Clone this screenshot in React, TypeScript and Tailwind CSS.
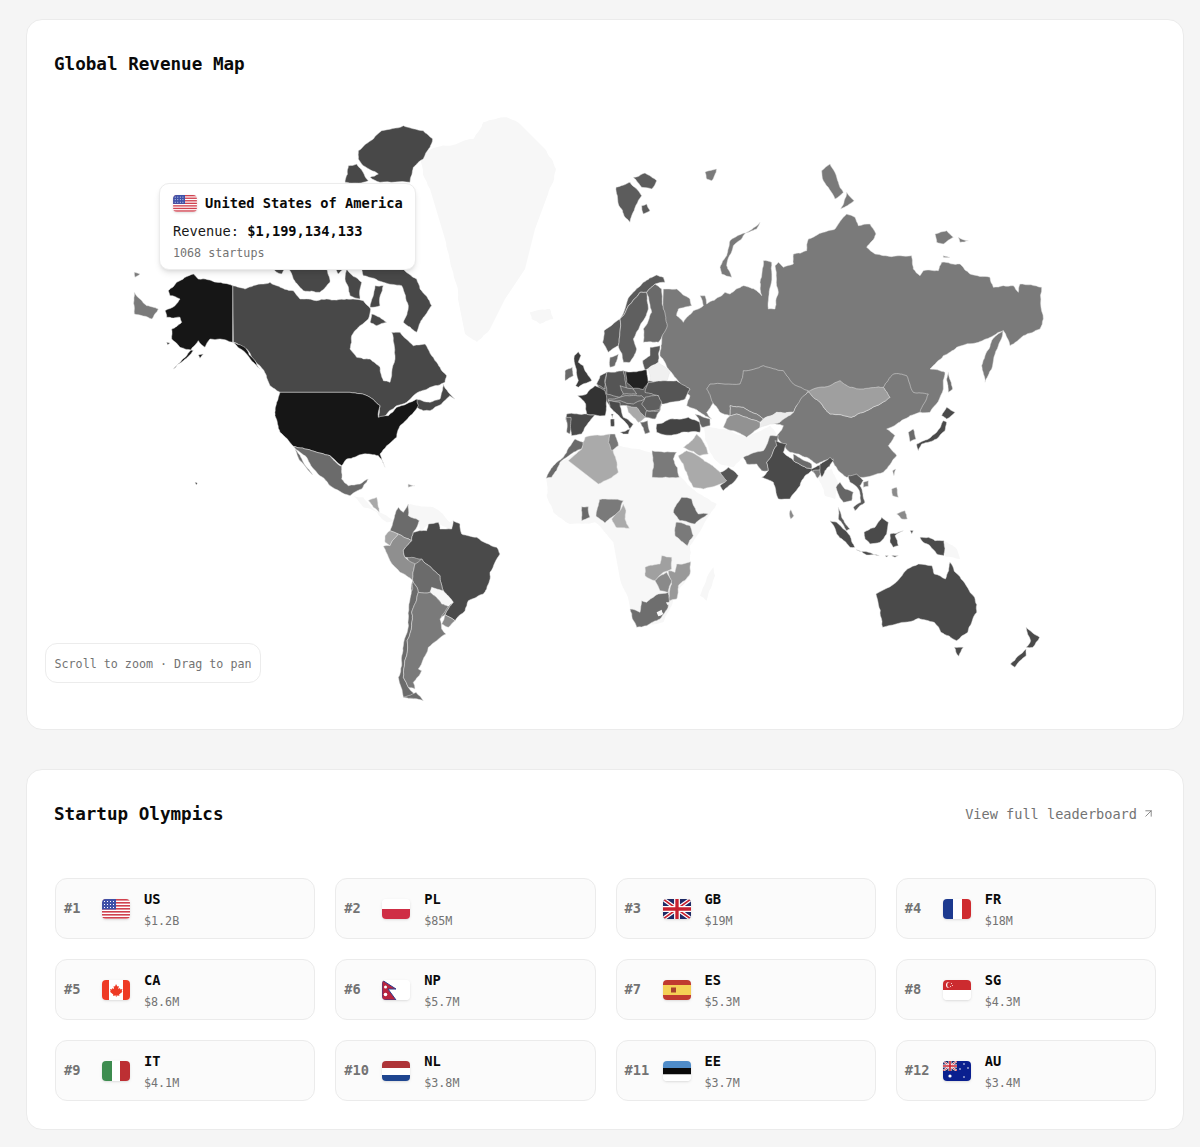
import { ArrowUpRight } from "lucide-react";

type Shape = [string, string];

// traced by hand, each list is in the coordinates of its own group
const northAmerica: Shape[] = [
  ["#f7f7f7", "880,130 960,110 1030,90 1060,40 1130,25 1170,45 1245,120 1278,180 1254,255 1215,360 1185,480 1125,570 1080,660 1041,699 1005,675 984,570 966,480 945,390 900,240 870,150"],
  ["#484848", "685,125 730,90 755,65 820,50 880,65 908,90 900,115 880,150 850,175 840,220 750,220 720,205 745,195 700,170 685,150"],
  ["#484848", "645,220 655,170 680,165 715,215 700,220"],
  ["#484848", "425,478 465,478 455,495 440,490"],
  ["#484848", "475,478 590,478 600,520 570,550 520,545 490,510"],
  ["#484848", "615,478 640,480 625,495"],
  ["#484848", "650,478 695,520 690,570 660,560 645,510"],
  ["#484848", "695,478 815,478 860,510 870,540 905,590 880,625 860,670 820,640 835,590 815,530 760,520 700,500"],
  ["#484848", "735,530 760,530 750,590 720,595"],
  ["#484848", "725,615 770,640 740,650 720,640"],
  ["#484848", "308,530 345,540 400,525 420,520 440,530 490,545 510,570 560,575 590,570 650,570 700,575 722,600 715,630 690,650 665,680 660,720 680,745 720,750 750,775 760,815 780,820 795,740 785,670 810,670 850,710 885,705 920,760 950,800 945,820 900,835 850,860 830,880 800,890 760,925 745,930 750,890 720,865 660,850 450,850 420,830 390,770 350,720 310,700"],
  ["#484848", "860,870 900,880 930,870 940,825 975,870 960,860 900,905 880,905 860,895"],
  ["#161616", "190,495 205,510 260,520 308,530 308,700 270,690 240,690 225,715 205,695 170,740 130,780 160,755 190,725 150,715 125,690 125,660 155,640 150,625 110,625 105,605 135,590 150,570 120,560 115,545 140,520"],
  ["#161616", "308,700 345,715 375,755 390,780 375,765 345,730"],
  ["#161616", "205,738 220,735 210,748"],
  ["#161616", "110,700 120,702 113,707"],
  ["#161616", "450,850 660,850 720,865 750,890 745,925 775,920 800,895 860,870 865,890 840,920 810,950 800,985 770,1010 750,1035 765,1075 745,1040 700,1035 650,1050 635,1070 600,1040 545,1025 490,1012 450,970 435,920 440,880"],
  ["#6b6b6b", "490,1012 545,1025 600,1040 635,1072 635,1110 655,1130 690,1125 715,1110 695,1140 660,1160 600,1130 560,1090 530,1045 510,1030"],
  ["#6b6b6b", "495,1020 520,1060 548,1098 510,1055"],
  ["#7a7a7a", "13,550 50,590 85,600 65,630 13,615"],
  ["#7a7a7a", "13,490 30,495 15,505"],
  ["#161616", "195,1120 202,1122 199,1128"],
];

const eurasia: Shape[] = [
  ["#f7f7f7", "0,490 60,480 70,510 30,525 5,510"],
  ["#f7f7f7", "520,830 580,840 650,865 720,830 740,855 700,905 640,925 610,955 570,945 540,910"],
  ["#f7f7f7", "850,965 905,960 925,1010 915,1050 885,1040 870,1000"],
  // the south edge runs under Kazakhstan and China, which are drawn on top
  ["#7a7a7a", "400,420 440,420 480,450 485,470 445,480 440,500 460,520 490,485 520,470 510,440 525,440 530,465 575,440 585,430 600,435 640,410 680,425 695,440 690,400 700,335 725,340 722,410 715,480 735,480 745,430 735,350 745,340 760,355 790,345 790,315 830,305 835,270 880,250 915,240 950,195 975,205 985,230 1020,225 1038,255 1010,295 1035,315 1060,320 1110,320 1145,320 1150,360 1170,380 1180,365 1225,365 1235,340 1290,345 1320,375 1380,385 1390,415 1450,410 1465,430 1470,405 1535,415 1540,510 1530,540 1480,560 1440,590 1420,545 1390,560 1345,580 1280,595 1240,620 1200,660 1245,670 1240,720 1200,790 1170,790 1150,770 1000,750 850,760 700,720 580,740 550,760 530,790 545,810 510,790 470,770 480,740 440,690 415,660 390,620 395,580"],
  ["#7a7a7a", "1420,545 1405,590 1385,660 1365,700 1355,650 1365,620 1385,575"],
  ["#7a7a7a", "690,220 680,240 635,255 600,275 590,320 570,355 575,375 605,385 590,350 610,290 650,250"],
  ["#7a7a7a", "875,65 900,45 925,100 940,130 915,150 880,95"],
  ["#7a7a7a", "950,130 972,155 932,180"],
  ["#7a7a7a", "1215,255 1250,245 1270,265 1240,285 1220,280"],
  ["#7a7a7a", "1285,265 1315,275 1290,280"],
  ["#7a7a7a", "1240,320 1260,325 1240,325"],
  ["#7a7a7a", "525,70 560,60 545,95 530,90"],
  ["#7a7a7a", "530,720 540,705 630,705 640,665 700,650 760,665 790,705 835,725 800,770 790,790 740,790 700,810 680,795 640,775 600,770 600,800 570,790 545,755"],
  ["#7a7a7a", "835,728 870,760 900,795 965,805 1000,790 1040,770 1080,745 1060,715 1090,675 1130,680 1150,730 1195,735 1170,790 1140,800 1100,825 1070,840 1095,860 1075,890 1100,920 1060,970 990,985 950,985 925,965 905,930 860,945 830,925 780,910 740,860 760,830 720,820 790,790 800,770"],
  ["#9f9f9f", "835,728 900,710 930,695 960,715 1000,720 1060,715 1080,745 1040,770 1000,790 965,805 900,795 870,760"],
  ["#7f7f7f", "600,770 640,775 680,795 700,810 690,820 650,805 620,795 600,800"],
  ["#929292", "600,800 620,795 650,805 690,820 690,835 650,865 610,845 580,835 590,810"],
  ["#ececec", "700,810 740,790 790,790 750,820 720,825 690,835"],
  ["#6b6b6b", "640,925 700,905 720,860 745,860 740,890 710,940 715,965 695,965 680,945 650,945"],
  ["#4a4a4a", "735,875 770,885 760,910 790,935 845,960 895,940 910,930 885,960 860,975 845,965 825,980 810,1010 780,1050 745,1050 730,1000 695,985 715,965 710,940 740,890"],
  ["#6b6b6b", "790,915 845,945 845,960 790,935"],
  ["#7a7a7a", "848,965 878,962 862,988"],
  ["#4a4a4a", "1160,885 1195,870 1220,850 1240,815 1250,820 1245,845 1220,870 1175,885 1165,905"],
  ["#4a4a4a", "1235,800 1250,775 1275,790 1250,810"],
  ["#6b6b6b", "1255,670 1268,720 1255,730 1250,690"],
  ["#6b6b6b", "1135,850 1150,840 1158,870 1140,878"],
  ["#5c5c5c", "258,115 300,100 335,140 305,200 300,220 285,205 265,165"],
  ["#5c5c5c", "310,85 345,72 380,95 365,120 335,115"],
  ["#5c5c5c", "335,170 350,165 360,185 340,195"],
  ["#5a5a5a", "400,385 380,378 340,400 300,440 270,510 222,545 218,580 235,610 265,590 270,510 295,470 330,430 350,430 375,405 405,400"],
  ["#5f5f5f", "330,430 350,430 355,480 330,530 310,570 320,600 300,640 280,640 265,590 270,510 295,470"],
  ["#6a6a6a", "375,405 395,420 400,480 412,530 385,580 340,580 340,540 365,490 350,430"],
  ["#5a5a5a", "360,595 390,590 385,640 345,665 338,635 360,620"],
];

const europe: Shape[] = [
  // underlay so the small countries meet without white gaps
  ["#5f5f5f", "125,135 155,100 205,95 280,125 330,125 405,150 390,180 320,195 315,215 300,240 270,235 250,250 215,200 165,205 155,185"],
  ["#3c3c3c", "58,50 70,38 78,50 70,70 85,80 100,110 110,125 70,145 62,140 70,125 62,85"],
  ["#6a6a6a", "30,95 52,85 55,110 30,125"],
  ["#6a6a6a", "165,55 190,45 180,80 165,85"],
  ["#4a4a4a", "35,225 95,225 120,228 90,265 80,285 50,290 45,270 32,240"],
  ["#333333", "95,165 120,140 150,155 155,185 150,230 120,228 95,225 92,195 68,170"],
  ["#5f5f5f", "32,235 48,235 45,285 35,280"],
  ["#555555", "155,100 205,95 215,150 195,175 155,165 150,130"],
  ["#4a4a4a", "135,110 155,100 150,150 125,135"],
  ["#f0f0f0", "280,90 310,70 345,100 335,130 285,125"],
  ["#222222", "212,98 275,92 280,130 265,152 235,148 215,130"],
  ["#555555", "280,130 330,125 365,125 405,150 390,180 345,190 320,195 310,170 270,160"],
  ["#666666", "195,140 235,150 245,165 205,165"],
  ["#666666", "160,180 210,170 260,170 270,180 235,195 195,185 160,185"],
  ["#5f5f5f", "270,175 310,170 320,190 315,210 275,215 260,195"],
  ["#aaaaaa", "215,200 245,205 270,235 250,250 220,220"],
  ["#5f5f5f", "275,215 315,215 300,240 270,235"],
  ["#4a4a4a", "160,185 195,190 205,235 235,255 225,270 195,235 165,205"],
  ["#4a4a4a", "195,280 225,270 220,285 205,285"],
  ["#4a4a4a", "167,240 178,240 178,262 167,262"],
  ["#4a4a4a", "168,225 175,225 172,238"],
  ["#666666", "255,250 278,245 285,280 270,285"],
  ["#444444", "305,255 345,240 400,235 435,250 435,280 380,280 330,288 305,280"],
  ["#666666", "420,225 465,240 465,260 440,265"],
];

const africa: Shape[] = [
  ["#f7f7f7", "20,150 60,100 80,90 135,45 240,50 330,70 420,140 470,190 530,225 500,270 450,350 450,390 450,440 400,510 370,580 290,595 270,540 240,450 220,340 165,280 90,285 40,250 20,200"],
  ["#f7f7f7", "520,415 525,440 500,515 480,500"],
  ["#aaaaaa", "470,15 490,40 505,75 480,80 440,60 430,55 460,30"],
  ["#aaaaaa", "415,80 440,65 480,85 510,105 540,130 565,160 490,180 460,175 440,130"],
  ["#555555", "565,115 595,140 575,165 550,185 540,170 560,155 540,130"],
  ["#7a7a7a", "336,65 410,70 400,90 418,145 336,145"],
  ["#6a6a6a", "105,30 135,40 125,60 80,85 60,100 35,145 18,148 40,110 70,85"],
  ["#aaaaaa", "135,25 210,15 210,40 220,70 235,130 175,165 85,95 125,60"],
  ["#777777", "210,15 225,15 235,50 215,65 205,40"],
  ["#6a6a6a", "125,233 145,233 150,265 125,275"],
  ["#7a7a7a", "178,212 250,215 240,245 215,265 195,282 168,262"],
  ["#aaaaaa", "250,225 258,245 255,270 268,298 228,295 215,270 240,245"],
  ["#666666", "425,205 455,210 475,255 505,255 465,285 420,275 400,250 410,225"],
  ["#7a7a7a", "408,280 450,290 460,320 442,350 405,320"],
  ["#a0a0a0", "365,380 395,385 395,420 370,430 345,455 315,440 315,415 360,405"],
  ["#999999", "410,405 452,398 450,435 415,470 410,510 385,515 395,465 385,425 405,430"],
  ["#8a8a8a", "345,455 380,430 395,455 385,490 360,485"],
  ["#6e6e6e", "270,540 300,550 305,515 320,520 355,495 385,490 385,530 360,570 320,590 290,595"],
  ["#f7f7f7", "350,550 365,542 370,555 355,562"],
  ["#f7f7f7", "378,520 390,520 385,530"],
];

const southAmerica: Shape[] = [
  ["#f7f7f7", "40,80 70,85 100,120 130,135 160,155 140,160 110,130 70,115"],
  ["#f7f7f7", "195,120 210,105 280,115 330,160 340,150 335,180 290,165 260,170 240,190 235,155 205,140"],
  // underlay for the middle of the continent
  ["#7a7a7a", "190,240 245,270 300,320 340,400 315,437 300,450 215,430 218,335"],
  ["#8f8f8f", "205,45 225,50 205,55"],
  ["#a8a8a8", "85,95 110,85 118,130 100,115"],
  ["#6b6b6b", "205,105 190,130 175,115 160,155 150,185 175,195 215,215 220,190 238,155 205,140"],
  ["#a5a5a5", "135,200 150,185 175,195 150,230 135,220"],
  ["#8f8f8f", "175,195 215,215 190,245 195,265 225,285 218,335 180,310 150,275 130,232 150,230"],
  ["#4a4a4a", "220,190 260,185 265,165 295,160 300,180 335,180 340,155 360,165 365,195 410,205 470,235 480,255 465,280 450,310 440,360 430,375 385,395 375,425 345,455 315,437 340,400 310,365 300,320 245,270 215,265 195,265 190,245 215,215"],
  ["#6b6b6b", "225,285 245,270 300,320 310,365 275,355 270,370 235,370 218,335"],
  ["#f7f7f7", "275,355 310,365 340,400 325,412 305,405 270,370"],
  ["#6b6b6b", "218,335 235,370 215,430 215,470 200,560 190,625 205,655 240,690 190,685 175,625 185,590 190,530 205,450 212,380"],
  ["#7a7a7a", "235,370 270,370 305,405 325,412 300,450 305,480 318,495 290,515 265,535 250,570 235,600 245,605 220,640 225,660 205,655 190,625 200,560 215,470 215,430"],
  ["#8a8a8a", "315,437 345,455 325,475 305,465"],
  ["#6b6b6b", "190,685 250,695 228,670 205,680"],
];

const southeastAsia: Shape[] = [
  ["#f7f7f7", "372,305 410,330 420,360 375,352"],
  ["#666666", "48,145 60,130 75,150 100,160 95,185 70,190 62,180"],
  ["#5a5a5a", "85,110 110,105 130,125 120,140 135,190 105,215 100,205 122,190 115,150 90,130"],
  ["#4a4a4a", "0,75 30,55 40,65 15,95 5,115 0,100"],
  ["#5a5a5a", "55,205 65,235 90,270 80,275 55,240"],
  ["#4a4a4a", "30,245 50,250 90,290 105,325 90,325 50,285"],
  ["#4a4a4a", "108,332 145,340 178,350 140,348"],
  ["#4a4a4a", "132,280 165,265 185,235 205,250 200,285 180,310 150,315 135,300"],
  ["#4a4a4a", "210,285 250,275 225,290 235,320 220,325 210,310"],
  ["#4a4a4a", "300,295 325,295 345,305 372,305 372,350 350,345 330,320 310,310"],
  ["#8a8a8a", "215,150 230,145 235,175 218,170"],
  ["#8a8a8a", "230,225 255,215 262,240 245,240"],
  ["#7a7a7a", "130,130 145,125 145,142 130,145"],
  ["#7a7a7a", "218,95 228,90 222,110"],
  ["#4a4a4a", "195,350 205,350 200,354"],
  ["#4a4a4a", "215,350 235,350 225,355"],
  ["#4a4a4a", "270,275 280,275 275,285"],
];

const oceania: Shape[] = [
  ["#4a4a4a", "1155,405 1210,355 1225,330 1250,315 1280,320 1285,345 1310,360 1320,310 1345,360 1375,415 1380,460 1360,520 1335,545 1300,520 1285,490 1250,478 1200,495 1170,505 1165,470"],
  ["#4a4a4a", "1330,565 1350,565 1340,592"],
  ["#4a4a4a", "1490,505 1520,535 1505,565 1490,565 1500,545"],
  ["#4a4a4a", "1490,570 1490,590 1465,625 1455,615"],
  ["#8a8a8a", "965,152 972,170 965,180 962,165"],
];

// the traced outlines are coarse: break edges up so coasts look less straight.
// long edges stay straight (49th parallel, Alaska, Egypt). the offset only depends
// on the edge, so two countries sharing a border still meet.
function roughen(points: string) {
  const pts = points.split(" ").map((p) => p.split(",").map(Number));
  const out: number[][] = [];
  const split = (a: number[], b: number[], depth: number) => {
    const len = Math.hypot(b[0] - a[0], b[1] - a[1]);
    if (depth === 0 || len < 9) {
      out.push(b);
      return;
    }
    const mx = (a[0] + b[0]) / 2;
    const my = (a[1] + b[1]) / 2;
    const noise = Math.sin(mx * 12.9898 + my * 78.233) * 43758.5453;
    const offset = (noise - Math.floor(noise) - 0.5) * len * 0.14;
    const flip = a[0] < b[0] || (a[0] === b[0] && a[1] < b[1]) ? 1 : -1;
    const mid = [mx + (flip * -(b[1] - a[1]) * offset) / len, my + (flip * (b[0] - a[0]) * offset) / len];
    split(a, mid, depth - 1);
    split(mid, b, depth - 1);
  };
  pts.forEach((p, i) => {
    const next = pts[(i + 1) % pts.length];
    if (Math.hypot(next[0] - p[0], next[1] - p[1]) > 100) out.push(next);
    else split(p, next, 3);
  });
  return out.map((p) => p.join(",")).join(" ");
}

function Area({ x, y, sx, sy = sx, shapes }: { x: number; y: number; sx: number; sy?: number; shapes: Shape[] }) {
  return (
    <g transform={`translate(${x} ${y}) scale(${sx} ${sy})`}>
      {shapes.map(([fill, points], i) => (
        <polygon
          key={i}
          fill={fill}
          points={roughen(points)}
          stroke={fill === "#f7f7f7" ? "none" : "#e5e5e5"}
          strokeWidth={0.5}
          strokeLinejoin="round"
          vectorEffect="non-scaling-stroke"
        />
      ))}
    </g>
  );
}

function WorldMap() {
  return (
    <svg viewBox="54 90 1102 620" className="block h-[620px] w-[1102px]">
      <Area x={540} y={430} sx={1 / 3} shapes={africa} />
      <Area x={530} y={150} sx={1 / 3} shapes={eurasia} />
      <Area x={130} y={110} sx={1 / 3} shapes={northAmerica} />
      <Area x={555} y={340} sx={1 / 3} shapes={europe} />
      <Area x={340} y={470} sx={1 / 3} shapes={southAmerica} />
      <Area x={820} y={440} sx={1 / 3} shapes={southeastAsia} />
      <Area x={358} y={460} sx={0.4484} sy={1 / 3} shapes={oceania} />
    </svg>
  );
}

function UnionJack({ w, h }: { w: number; h: number }) {
  return (
    <>
      <rect width={w} height={h} fill="#1f2a66" />
      <path d={`M0 0L${w} ${h}M${w} 0L0 ${h}`} stroke="#fff" strokeWidth={h / 5} />
      <path d={`M0 0L${w} ${h}M${w} 0L0 ${h}`} stroke="#c8202f" strokeWidth={h / 12} />
      <path d={`M${w / 2} 0V${h}M0 ${h / 2}H${w}`} stroke="#fff" strokeWidth={h / 3.4} />
      <path d={`M${w / 2} 0V${h}M0 ${h / 2}H${w}`} stroke="#c8202f" strokeWidth={h / 6} />
    </>
  );
}

function FlagArt({ code }: { code: string }) {
  switch (code) {
    case "US":
      return (
        <>
          <rect width="28" height="20" fill="#fff" />
          {[0, 3, 6, 9, 12, 15, 18].map((y) => (
            <rect key={y} y={y} width="28" height="1.6" fill="#d0424f" />
          ))}
          <rect width="14" height="10.5" fill="#3f51a8" />
          {[2, 5, 8].map((y) =>
            [2, 5, 8, 11].map((x) => <rect key={x} x={x} y={y} width="1" height="1" fill="#fff" />),
          )}
        </>
      );
    case "PL":
      return (
        <>
          <rect width="28" height="10" fill="#fff" />
          <rect y="10" width="28" height="10" fill="#cf2e45" />
        </>
      );
    case "GB":
      return <UnionJack w={28} h={20} />;
    case "FR":
      return (
        <>
          <rect width="10" height="20" fill="#1d3a8f" />
          <rect x="10" width="9" height="20" fill="#fff" />
          <rect x="19" width="9" height="20" fill="#cf2b2f" />
        </>
      );
    case "CA":
      return (
        <>
          <rect width="28" height="20" fill="#fff" />
          <rect width="7" height="20" fill="#ee3a24" />
          <rect x="21" width="7" height="20" fill="#ee3a24" />
          <path d="M14 4l1.4 2.6 1.4-.7-.5 3.4 1.6-1.2.5 1.3 2-.3-.7 2.2.8.5-3.4 2.7.4 1.3-3-.4V17h-.6v-1.6l-3 .4.4-1.3-3.4-2.7.8-.5-.7-2.2 2 .3.5-1.3 1.6 1.2-.5-3.4 1.4.7z" fill="#ee3a24" />
        </>
      );
    case "NP":
      return (
        <>
          <rect width="28" height="20" fill="#fff" />
          <path d="M0 0L14 9H6L14 20H0Z" fill="#b8243f" stroke="#2d3f8f" strokeWidth="1" />
          <circle cx="3.5" cy="7" r="1.5" fill="#fff" />
          <circle cx="3.5" cy="14.5" r="1.8" fill="#fff" />
        </>
      );
    case "ES":
      return (
        <>
          <rect width="28" height="20" fill="#c0392f" />
          <rect y="5" width="28" height="10" fill="#f4cf55" />
          <rect x="8" y="7.5" width="5" height="5" fill="#a8402c" />
        </>
      );
    case "SG":
      return (
        <>
          <rect width="28" height="20" fill="#fff" />
          <rect width="28" height="10" fill="#cc2b2f" />
          <circle cx="6" cy="5" r="3" fill="#fff" />
          <circle cx="7.2" cy="5" r="3" fill="#cc2b2f" />
          <circle cx="8.5" cy="3.5" r="0.5" fill="#fff" />
          <circle cx="9.5" cy="5.5" r="0.5" fill="#fff" />
          <circle cx="7.5" cy="6.5" r="0.5" fill="#fff" />
        </>
      );
    case "IT":
      return (
        <>
          <rect width="10" height="20" fill="#3d8c4f" />
          <rect x="10" width="8" height="20" fill="#fff" />
          <rect x="18" width="10" height="20" fill="#bd2f33" />
        </>
      );
    case "NL":
      return (
        <>
          <rect width="28" height="7" fill="#ae3438" />
          <rect y="7" width="28" height="7" fill="#fff" />
          <rect y="14" width="28" height="6" fill="#1f4690" />
        </>
      );
    case "EE":
      return (
        <>
          <rect width="28" height="7" fill="#4f8cc9" />
          <rect y="7" width="28" height="6.5" fill="#0a0a0a" />
          <rect y="13.5" width="28" height="6.5" fill="#fff" />
        </>
      );
    case "AU":
      return (
        <>
          <rect width="28" height="20" fill="#0a1f8f" />
          <svg width="14" height="10">
            <UnionJack w={14} h={10} />
          </svg>
          <circle cx="7" cy="15" r="1.6" fill="#fff" />
          <circle cx="21" cy="3" r="0.8" fill="#fff" />
          <circle cx="21" cy="16" r="0.8" fill="#fff" />
          <circle cx="17" cy="8" r="0.8" fill="#fff" />
          <circle cx="25" cy="7" r="0.8" fill="#fff" />
        </>
      );
    default:
      return null;
  }
}

function Flag({ code, className }: { code: string; className: string }) {
  return (
    <svg viewBox="0 0 28 20" className={`shrink-0 rounded-[4px] shadow-sm ${className}`}>
      <FlagArt code={code} />
    </svg>
  );
}

const leaders = [
  { code: "US", value: "$1.2B" },
  { code: "PL", value: "$85M" },
  { code: "GB", value: "$19M" },
  { code: "FR", value: "$18M" },
  { code: "CA", value: "$8.6M" },
  { code: "NP", value: "$5.7M" },
  { code: "ES", value: "$5.3M" },
  { code: "SG", value: "$4.3M" },
  { code: "IT", value: "$4.1M" },
  { code: "NL", value: "$3.8M" },
  { code: "EE", value: "$3.7M" },
  { code: "AU", value: "$3.4M" },
];

function LeaderCard({ rank, code, value }: { rank: number; code: string; value: string }) {
  return (
    <div className="flex h-[61px] items-center rounded-xl border border-[#ebebeb] bg-[#fbfbfb] pl-[8px]">
      <span className="w-[38px] text-[13.7px] font-bold text-[#737373]">#{rank}</span>
      <Flag code={code} className="h-5 w-7" />
      <div className="ml-[14px] flex flex-col gap-[4px]">
        <span className="text-[13.7px] leading-[20px] font-bold text-[#0a0a0a]">{code}</span>
        <span className="text-[11.7px] leading-[16px] text-[#737373]">{value}</span>
      </div>
    </div>
  );
}

export default function App() {
  return (
    <div className="flex min-h-screen flex-col gap-[39px] bg-[#f5f5f5] pt-[19px] pr-[16px] pl-[26px] font-['DejaVu_Sans_Mono',monospace]">
      <section className="relative rounded-2xl border border-[#ebebeb] bg-white px-[27px] pt-[28px] pb-[20px]">
        <h2 className="h-[41px] text-[17.6px] leading-[32px] font-bold text-[#0a0a0a]">Global Revenue Map</h2>
        <WorldMap />
        <div className="absolute top-[163px] left-[132px] h-[87px] w-[257px] rounded-[10px] border border-[#ececec] bg-white px-[13px] pt-[9px] whitespace-nowrap shadow-md">
          <div className="flex items-center gap-[8px]">
            <Flag code="US" className="h-[17px] w-6" />
            <span className="text-[13.7px] leading-[20px] font-bold text-[#0a0a0a]">United States of America</span>
          </div>
          <div className="mt-[8px] text-[13.7px] leading-[20px] text-[#171717]">
            Revenue: <span className="font-bold text-[#0a0a0a]">$1,199,134,133</span>
          </div>
          <div className="mt-[4px] text-[11.7px] leading-[16px] text-[#737373]">1068 startups</div>
        </div>
        <div className="absolute bottom-[46px] left-[18px] flex h-[40px] w-[216px] items-center justify-center rounded-xl border border-[#ececec] bg-white pt-[3px] text-[11.7px] text-[#737373]">
          Scroll to zoom · Drag to pan
        </div>
      </section>

      <section className="rounded-2xl border border-[#ebebeb] bg-white pt-[28px] pr-[27px] pb-[28px] pl-[28px]">
        <div className="mb-[48px] -ml-px flex h-[32px] items-center justify-between">
          <h2 className="text-[17.6px] font-bold text-[#0a0a0a]">Startup Olympics</h2>
          <a className="flex items-center gap-[5px] pr-[1px] text-[13.6px] text-[#737373]">
            View full leaderboard
            <ArrowUpRight size={13} strokeWidth={1.5} />
          </a>
        </div>
        <div className="grid grid-cols-4 gap-5">
          {leaders.map((l, i) => (
            <LeaderCard key={l.code} rank={i + 1} code={l.code} value={l.value} />
          ))}
        </div>
      </section>
    </div>
  );
}
